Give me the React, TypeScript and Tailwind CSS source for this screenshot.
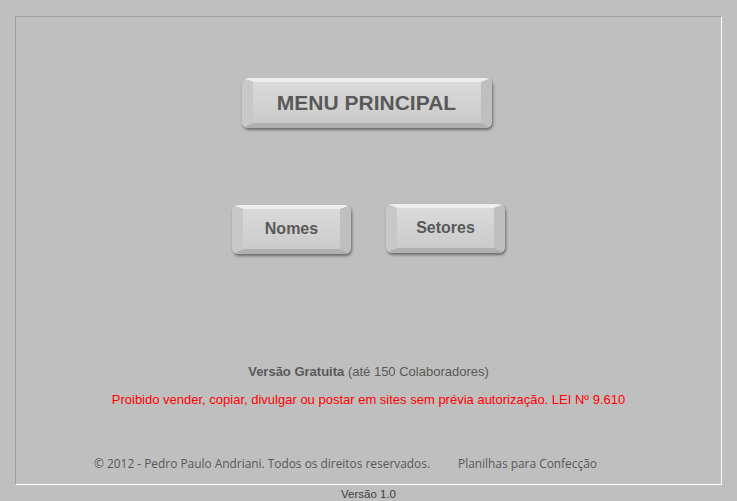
function BevelButton({ label, className, textClass }: { label: string; className: string; textClass: string }) {
  return (
    <div className={`rounded-[6px] shadow-[1px_2px_3px_rgba(0,0,0,0.45)] ${className}`}>
      <div
        className={`flex h-full w-full items-center justify-center rounded-[6px] border-t-[4px] border-r-[11px] border-b-[5px] border-l-[11px] border-t-[#eeeeee] border-r-[#bfbfbf] border-b-[#b0b0b0] border-l-[#c8c8c8] bg-gradient-to-b from-[#dadada] to-[#cbcbcb] font-['Liberation_Sans',Arial,sans-serif] font-bold text-[#595959] ${textClass}`}
      >
        {label}
      </div>
    </div>
  );
}

export default function App() {
  return (
    <div className="h-[501px] w-[737px] bg-[#bfbfbf] pl-[15px] pt-[16px]">
      <div className="flex h-[469px] w-[707px] flex-col items-center border-t border-l border-t-[#9c9c9c] border-l-[#9c9c9c] border-r border-b border-r-white border-b-white">
        <BevelButton label="MENU PRINCIPAL" className="mt-[61px] mr-[4px] h-[50px] w-[250px]" textClass="text-[21px]" />

        <div className="mt-[76px] flex items-start gap-[35px]">
          <BevelButton label="Nomes" className="mt-[1px] h-[49px] w-[119px]" textClass="text-[16px]" />
          <BevelButton label="Setores" className="h-[49px] w-[119px]" textClass="text-[16px]" />
        </div>

        <p className="mt-[110px] font-['Liberation_Sans',Arial,sans-serif] text-[13px] leading-[15px] text-[#595959]">
          <span className="font-bold">Versão Gratuita</span> (até 150 Colaboradores)
        </p>
        <p className="mt-[13px] font-['Liberation_Sans',Arial,sans-serif] text-[13px] leading-[15px] text-[#ff0000]">
          Proibido vender, copiar, divulgar ou postar em sites sem prévia autorização. LEI Nº 9.610
        </p>

        <div className="mt-[49px] flex w-full gap-[28px] pl-[78px] font-['Open_Sans',sans-serif] text-[11.9px] leading-[15px] text-[#595959]">
          <span>© 2012 - Pedro Paulo Andriani. Todos os direitos reservados.</span>
          <span>Planilhas para Confecção</span>
        </div>
      </div>
      <p className="mt-[2px] w-[707px] text-center font-['Liberation_Sans',Arial,sans-serif] text-[11.5px] leading-[14px] text-[#404040]">
        Versão 1.0
      </p>
    </div>
  );
}
